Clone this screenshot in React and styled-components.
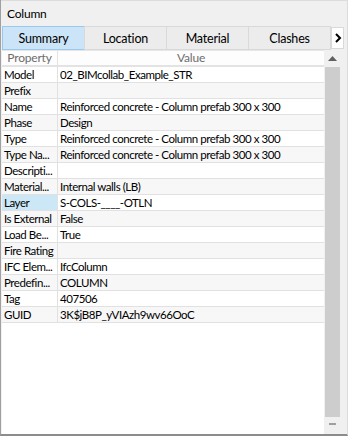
import React from "react";
import styled, { createGlobalStyle } from "styled-components";

const rows = [
  ["Model", "02_BIMcollab_Example_STR"],
  ["Prefix", ""],
  ["Name", "Reinforced concrete - Column prefab 300 x 300"],
  ["Phase", "Design"],
  ["Type", "Reinforced concrete - Column prefab 300 x 300"],
  ["Type Na...", "Reinforced concrete - Column prefab 300 x 300"],
  ["Descripti...", ""],
  ["Material...", "Internal walls (LB)"],
  ["Layer", "S-COLS-____-OTLN", true],
  ["Is External", "False"],
  ["Load Be...", "True"],
  ["Fire Rating", ""],
  ["IFC Elem...", "IfcColumn"],
  ["Predefin...", "COLUMN"],
  ["Tag", "407506"],
  ["GUID", "3K$jB8P_yVIAzh9wv66OoC"],
];

const tabs = ["Summary", "Location", "Material", "Clashes"];

const App = () => {
  return (
    <>
      <GlobalStyle />
      <Frame>
        <Title>Column</Title>
        <TabStrip>
          {tabs.map((t, i) => (
            <Tab key={t} active={i === 0}>
              {t}
            </Tab>
          ))}
          <TabArrow>
            <svg width="8" height="10" viewBox="0 0 8 10">
              <path d="M2 1 L6 5 L2 9" fill="none" stroke="#000" strokeWidth="2" />
            </svg>
          </TabArrow>
        </TabStrip>
        <Body>
          <Grid>
            <HeaderRow>
              <HeadCell>Property</HeadCell>
              <HeadCell wide>Value</HeadCell>
            </HeaderRow>
            {rows.map(([k, v, sel], i) => (
              <Row key={k} odd={i % 2 === 1}>
                <KeyCell selected={sel}>{k}</KeyCell>
                <ValueCell>{v}</ValueCell>
              </Row>
            ))}
          </Grid>
          <Scrollbar>
            <ScrollButton>
              <svg width="9" height="5" viewBox="0 0 9 5">
                <path d="M0 5 L4.5 0 L9 5 Z" fill="#606060" />
              </svg>
            </ScrollButton>
            <Thumb />
            <ScrollButton>
              <svg width="9" height="5" viewBox="0 0 9 5">
                <path d="M1 0 L8 0 L8 2 L1 2 Z" fill="#a0a0a0" />
              </svg>
            </ScrollButton>
          </Scrollbar>
        </Body>
      </Frame>
    </>
  );
};

export default App;

const GlobalStyle = createGlobalStyle`
  html, body {
    margin: 0;
    padding: 0;
    background: #f0f0f0;
  }
  body {
    font-family: "Lato", "Open Sans", sans-serif;
    font-size: 11.5px;
    letter-spacing: -0.45px;
    color: #000;
  }
`;

const Frame = styled.div`
  width: 346px;
  height: 434px;
  background: #f0f0f0;
  border-left: 1px solid #a0a0a0;
  border-right: 1px solid #dcdcdc;
  border-bottom: 2px solid #8c8c8c;
  display: flex;
  flex-direction: column;
  overflow: hidden;
`;

const Title = styled.div`
  height: 26px;
  line-height: 25px;
  padding-left: 6px;
  font-size: 12px;
  letter-spacing: -0.2px;
  border-top: 1px solid #dcdcdc;
  box-sizing: border-box;
`;

const TabStrip = styled.div`
  display: flex;
  align-items: stretch;
  height: 24px;
  padding-left: 1px;
`;

const Tab = styled.div`
  width: 83px;
  box-sizing: border-box;
  display: flex;
  align-items: center;
  justify-content: center;
  font-size: 12.5px;
  letter-spacing: -0.2px;
  background: ${({ active }) => (active ? "#cce4f7" : "#ececec")};
  border: 1px solid ${({ active }) => (active ? "#99c9ef" : "#d9d9d9")};
  margin-right: -1px;
`;

const TabArrow = styled.div`
  width: 13px;
  margin-left: 1px;
  margin-top: 1px;
  margin-bottom: 1px;
  box-sizing: border-box;
  background: #fff;
  border: 1px solid #d9d9d9;
  display: flex;
  align-items: center;
  justify-content: center;
`;

const Body = styled.div`
  flex: 1;
  display: flex;
  padding: 0 6px 0 1px;
`;

const Grid = styled.div`
  flex: 1;
  background: #fff;
  border-top: 1px solid #e6e6e6;
`;

const HeaderRow = styled.div`
  display: flex;
  height: 16px;
  box-sizing: border-box;
  border-bottom: 2px solid #e3e3e3;
  background: #fdfdfd;
`;

const HeadCell = styled.div`
  width: ${({ wide }) => (wide ? "auto" : "56px")};
  flex: ${({ wide }) => (wide ? 1 : "none")};
  color: #6d6d6d;
  text-align: center;
  line-height: 14px;
  font-size: 12px;
  letter-spacing: -0.2px;
  border-right: ${({ wide }) => (wide ? "none" : "1px solid #e3e3e3")};
  box-sizing: border-box;
`;

const Row = styled.div`
  display: flex;
  height: 16px;
  box-sizing: border-box;
  border-bottom: 1px solid #e1e1e1;
  background: ${({ odd }) => (odd ? "#f7f7f7" : "#fff")};
`;

const KeyCell = styled.div`
  width: 56px;
  flex: none;
  box-sizing: border-box;
  padding-left: 2px;
  line-height: 16px;
  white-space: nowrap;
  overflow: hidden;
  border-right: 1px solid #e1e1e1;
  background: ${({ selected }) => (selected ? "#cce8f6" : "inherit")};
`;

const ValueCell = styled.div`
  flex: 1;
  padding-left: 2px;
  line-height: 16px;
  white-space: nowrap;
  overflow: hidden;
`;

const Scrollbar = styled.div`
  width: 17px;
  flex: none;
  background: #f0f0f0;
  display: flex;
  flex-direction: column;
`;

const ScrollButton = styled.div`
  height: 17px;
  display: flex;
  align-items: center;
  justify-content: center;
`;

const Thumb = styled.div`
  flex: 1;
  margin: 0 1px;
  background: #cdcdcd;
`;
